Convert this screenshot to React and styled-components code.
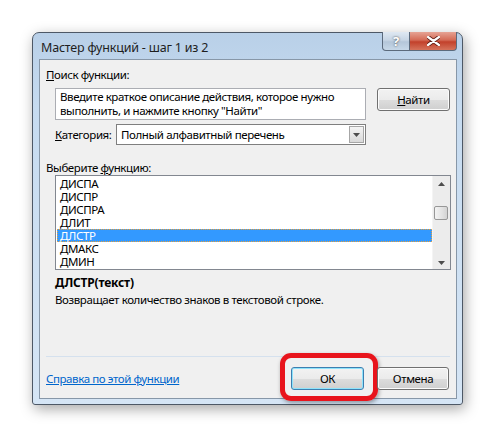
import styled, { createGlobalStyle } from "styled-components";

const GlobalStyle = createGlobalStyle`
  html, body {
    margin: 0;
    padding: 0;
    background: #ffffff;
  }
  body {
    font-family: "Noto Sans", "Open Sans", sans-serif;
    font-size: 11.5px;
    letter-spacing: -0.4px;
    color: #000;
  }
`;

const Page = styled.div`
  width: 497px;
  height: 439px;
  padding: 32px 0 0 32px;
  box-sizing: border-box;
`;

const Window = styled.div`
  width: 431px;
  height: 373px;
  box-sizing: border-box;
  border: 1px solid #4d5866;
  border-radius: 7px 7px 3px 3px;
  background: linear-gradient(180deg, #b9d0e8 0%, #c6dbf0 20%, #d5e5f5 100%);
  box-shadow: 2px 4px 14px rgba(0, 0, 0, 0.35);
  display: flex;
  flex-direction: column;
  padding: 0 5px 5px 6px;
`;

const TitleBar = styled.div`
  height: 26px;
  display: flex;
  align-items: flex-start;
  justify-content: space-between;
`;

const Title = styled.div`
  padding: 6px 0 0 2px;
  font-size: 12.5px;
  color: #1e1e1e;
  letter-spacing: -0.2px;
`;

const Caption = styled.div`
  display: flex;
  margin-top: -1px;
`;

const CaptionButton = styled.div`
  width: ${(p) => p.$w}px;
  height: 19px;
  box-sizing: border-box;
  border: 1px solid #5b6a7c;
  border-top: none;
  display: flex;
  align-items: center;
  justify-content: center;
  color: #fff;
  font-weight: bold;
  font-size: 13px;
  text-shadow: 0 0 2px #333;
  background: ${(p) =>
    p.$close
      ? "linear-gradient(180deg, #e6a394 0%, #d46a55 45%, #c2412b 55%, #d5735b 100%)"
      : "linear-gradient(180deg, #dfe8f2 0%, #c7d5e4 45%, #b4c6d9 55%, #c7d8e8 100%)"};
  border-radius: ${(p) => (p.$close ? "0 0 4px 0" : "0 0 0 4px")};
  ${(p) => p.$close && "border-left: none;"}
`;

const Client = styled.div`
  flex: 1;
  border: 1px solid #8797a8;
  background: #f0f0f0;
  display: flex;
  flex-direction: column;
  padding: 7px 6px 0 6px;
`;

const Label = styled.div`
  line-height: 15px;
  height: 15px;
  flex-shrink: 0;
  ${(p) => p.$w && `width: ${p.$w}px;`}
`;

const SearchRow = styled.div`
  display: flex;
  align-items: flex-start;
  margin-top: 6px;
  padding-left: 9px;
  gap: 11px;
`;

const SearchBox = styled.div`
  width: 311px;
  height: 32px;
  box-sizing: border-box;
  border: 1px solid #abadb3;
  background: #fff;
  padding: 1px 4px;
  line-height: 14px;
`;

const Button = styled.div`
  width: ${(p) => p.$w || 73}px;
  height: 23px;
  box-sizing: border-box;
  border: 1px solid ${(p) => (p.$default ? "#3c7fb1" : "#707070")};
  border-radius: 3px;
  background: linear-gradient(180deg, #f2f2f2 0%, #ebebeb 50%, #dddddd 51%, #cfcfcf 100%);
  box-shadow: inset 0 0 0 1px ${(p) => (p.$default ? "#8ee3fb" : "#fcfcfc")};
  display: flex;
  align-items: center;
  justify-content: center;
  position: relative;
`;

const CategoryRow = styled.div`
  display: flex;
  align-items: center;
  margin-top: 4px;
  padding-left: 9px;
  gap: 4px;
`;

const Select = styled.div`
  width: 250px;
  height: 21px;
  box-sizing: border-box;
  border: 1px solid #7f7f7f;
  background: #fff;
  display: flex;
  align-items: center;
  justify-content: space-between;
  padding-left: 4px;
`;

const DropButton = styled.div`
  width: 15px;
  height: 17px;
  margin-right: 1px;
  box-sizing: border-box;
  border: 1px solid #a6a6a6;
  background: linear-gradient(180deg, #f4f4f4, #d9d9d9);
  display: flex;
  align-items: center;
  justify-content: center;
`;

const SectionLabel = styled(Label)`
  margin-top: 15px;
`;

const List = styled.div`
  margin: 0 0 0 9px;
  width: 396px;
  height: 95px;
  box-sizing: border-box;
  border: 1px solid #828790;
  background: #fff;
  display: flex;
`;

const Items = styled.div`
  flex: 1;
  padding: 1px 0 0 1px;
`;

const Item = styled.div`
  height: 13px;
  line-height: 13px;
  box-sizing: border-box;
  padding-left: 3px;
  ${(p) =>
    p.$selected &&
    `
    background: #3399ff;
    color: #fff;
    border: 1px dotted #e8a03a;
    line-height: 11px;
    padding-left: 2px;
  `}
`;

const ScrollBar = styled.div`
  width: 17px;
  background: #ececec;
  border-left: 1px solid #f4f4f4;
  display: flex;
  flex-direction: column;
  align-items: center;
  justify-content: space-between;
  padding: 6px 0 4px;
  position: relative;
`;

const Thumb = styled.div`
  position: absolute;
  top: 30px;
  left: 1px;
  width: 14px;
  height: 14px;
  box-sizing: border-box;
  border: 1px solid #979797;
  border-radius: 2px;
  background: linear-gradient(90deg, #f3f3f3, #e2e2e2 60%, #d3d3d3);
`;

const FuncName = styled.div`
  margin: 5px 0 0 9px;
  font-weight: bold;
  font-size: 12px;
  line-height: 15px;
  letter-spacing: -0.2px;
`;

const FuncDesc = styled.div`
  margin: 2px 0 0 9px;
  line-height: 15px;
`;

const Spacer = styled.div`
  flex: 1;
`;

const Separator = styled.div`
  height: 1px;
  background: #d5e1ee;
`;

const Footer = styled.div`
  display: flex;
  align-items: center;
  height: 40px;
  padding-bottom: 1px;
`;

const HelpLink = styled.a`
  color: #0066cc;
  text-decoration: underline;
  margin-top: 2px;
`;

const Buttons = styled.div`
  margin-left: auto;
  display: flex;
  gap: 13px;
  padding-right: 1px;
  margin-top: 3px;
`;

const Highlight = styled.div`
  position: absolute;
  left: -12px;
  top: -15px;
  width: 98px;
  height: 48px;
  box-sizing: border-box;
  border: 5px solid #e8141c;
  border-radius: 11px;
  box-shadow: 1px 2px 4px rgba(0, 0, 0, 0.35);
`;

const Arrow = ({ up }) => (
  <svg width="7" height="4" viewBox="0 0 7 4">
    <path d={up ? "M0 4 L3.5 0 L7 4 Z" : "M0 0 L7 0 L3.5 4 Z"} fill="#4d4d4d" />
  </svg>
);

const functions = ["ДИСПА", "ДИСПР", "ДИСПРА", "ДЛИТ", "ДЛСТР", "ДМАКС", "ДМИН"];

export default function App() {
  return (
    <>
      <GlobalStyle />
      <Page>
        <Window>
          <TitleBar>
            <Title>Мастер функций - шаг 1 из 2</Title>
            <Caption>
              <CaptionButton $w={28}>?</CaptionButton>
              <CaptionButton $w={47} $close>
                <svg width="13" height="10" viewBox="0 0 13 10">
                  <path
                    d="M1 1 L12 9 M12 1 L1 9"
                    stroke="#5a1a10"
                    strokeWidth="4"
                    strokeLinecap="round"
                  />
                  <path
                    d="M1 1 L12 9 M12 1 L1 9"
                    stroke="#fff"
                    strokeWidth="2.2"
                    strokeLinecap="round"
                  />
                </svg>
              </CaptionButton>
            </Caption>
          </TitleBar>
          <Client>
            <Label>
              <u>П</u>оиск функции:
            </Label>
            <SearchRow>
              <SearchBox>
                Введите краткое описание действия, которое нужно
                <br />
                выполнить, и нажмите кнопку "Найти"
              </SearchBox>
              <Button $w={73}>
                <u>Н</u>айти
              </Button>
            </SearchRow>
            <CategoryRow>
              <Label $w={57}>
                <u>К</u>атегория:
              </Label>
              <Select>
                Полный алфавитный перечень
                <DropButton>
                  <Arrow />
                </DropButton>
              </Select>
            </CategoryRow>
            <SectionLabel>
              Выберите <u>ф</u>ункцию:
            </SectionLabel>
            <List>
              <Items>
                {functions.map((f) => (
                  <Item key={f} $selected={f === "ДЛСТР"}>
                    {f}
                  </Item>
                ))}
              </Items>
              <ScrollBar>
                <Arrow up />
                <Thumb />
                <Arrow />
              </ScrollBar>
            </List>
            <FuncName>ДЛСТР(текст)</FuncName>
            <FuncDesc>Возвращает количество знаков в текстовой строке.</FuncDesc>
            <Spacer />
            <Separator />
            <Footer>
              <HelpLink href="#">Справка по этой функции</HelpLink>
              <Buttons>
                <Button $default>
                  ОК
                  <Highlight />
                </Button>
                <Button $w={72}>Отмена</Button>
              </Buttons>
            </Footer>
          </Client>
        </Window>
      </Page>
    </>
  );
}
